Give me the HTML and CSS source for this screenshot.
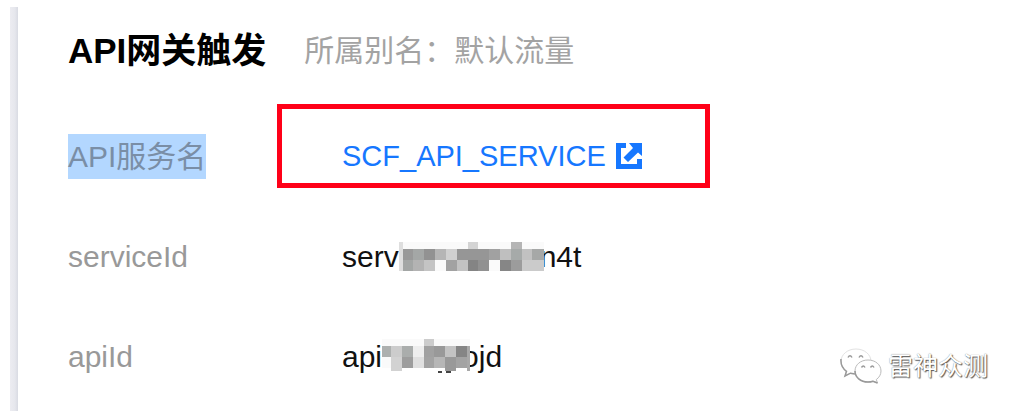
FILE: index.html
```html
<!DOCTYPE html>
<html lang="zh-CN">
<head>
<meta charset="utf-8">
<title>API网关触发</title>
<link rel="stylesheet" href="styles.css">
</head>
<body>
<main class="panel">
  <div class="content">
    <header class="heading">
      <h1 class="title">API网关触发</h1>
      <span class="alias">所属别名：默认流量</span>
    </header>
    <dl class="details">
      <div class="row">
        <dt class="label"><mark class="selected">API服务名</mark></dt>
        <dd class="value marked">
          <a class="link" href="#">SCF_API_SERVICE
            <svg class="external" viewBox="0 0 26 26" aria-hidden="true"><path d="M0 0H10V5H5V21H21V16H26V26H0Z"/><path d="M13 0H26V13L22 9.500L12 19L7.500 14.500L17 5Z"/></svg>
          </a>
        </dd>
      </div>
      <div class="row">
        <dt class="label">serviceId</dt>
        <dd class="value"><span>serv</span><svg class="mosaic mosaic-service" viewBox="205 35 435 87" preserveAspectRatio="none" shape-rendering="crispEdges" aria-hidden="true">
          <path fill="#fafafa" d="M205 35H640V122H205Z"/>
          <path fill="#dedede" d="M205 35H216V122H205Z"/>
          <path fill="#d4d4d4" d="M411 35H443V55H411Z"/><path fill="#b5b5b5" d="M540 35H573V55H540Z"/>
          <path fill="#999" d="M216 55H248V88H216Z"/><path fill="#a4a7a6" d="M248 55H281V88H248Z"/><path fill="#929292" d="M281 55H313V88H281Z"/><path fill="#b5b5b5" d="M313 55H345V88H313Z"/><path fill="#d0d0d0" d="M345 55H378V88H345Z"/><path fill="#969696" d="M378 55H475V88H378Z"/><path fill="#a1a1a1" d="M475 55H508V88H475Z"/><path fill="#bfbfbf" d="M508 55H540V88H508Z"/><path fill="#a6aaa9" d="M540 55H573V88H540Z"/><path fill="#c1c1c1" d="M573 55H605V88H573Z"/><path fill="#a6a8a7" d="M605 55H640V88H605Z"/>
          <path fill="#a3a6a5" d="M216 88H248V122H216Z"/><path fill="#b3b3b3" d="M248 88H281V122H248Z"/><path fill="#c4c4c4" d="M281 88H313V122H281Z"/><path fill="#a2a2a2" d="M345 88H378V122H345Z"/><path fill="#c2c2c2" d="M378 88H411V122H378Z"/><path fill="#848484" d="M411 88H443V122H411Z"/><path fill="#919191" d="M443 88H475V122H443Z"/><path fill="#868686" d="M508 88H540V122H508Z"/><path fill="#9c9c9c" d="M540 88H573V122H540Z"/><path fill="#cbcbcb" d="M573 88H640V122H573Z"/>
        </svg><span>n4t</span></dd>
      </div>
      <div class="row">
        <dt class="label">apiId</dt>
        <dd class="value"><span>api</span><svg class="mosaic mosaic-api" viewBox="156 26 264 105" preserveAspectRatio="none" shape-rendering="crispEdges" aria-hidden="true">
          <path fill="#fafafa" d="M156 26H420V114H156Z"/>
          <path fill="#ccc" d="M281 26H313V47H281Z"/>
          <path fill="#adb0af" d="M156 47H183V80H156Z"/><path fill="#ccc" d="M183 47H215V80H183Z"/><path fill="#aaadac" d="M215 47H248V80H215Z"/><path fill="#eee" d="M248 47H281V80H248Z"/><path fill="#a1a1a1" d="M281 47H313V80H281Z"/><path fill="#999" d="M313 47H345V80H313Z"/><path fill="#c3c3c3" d="M345 47H378V80H345Z"/><path fill="#858585" d="M378 47H410V80H378Z"/><path fill="#a8a8a8" d="M410 47H420V122H410Z"/>
          <path fill="#d2d2d2" d="M183 80H215V122H183Z"/><path fill="#9d9d9d" d="M215 80H248V114H215Z"/><path fill="#e0e0e0" d="M248 80H281V114H248Z"/><path fill="#a3a3a3" d="M281 80H313V114H281Z"/><path fill="#b6b6b6" d="M313 80H345V114H313Z"/><path fill="#999" d="M345 80H378V122H345Z"/><path fill="#a3a3a3" d="M378 80H410V114H378Z"/>
          <path fill="#444" d="M323 123H335V129H323ZM349 123H364V129H349Z"/>
        </svg><span>ojd</span></dd>
      </div>
    </dl>
  </div>
</main>
<aside class="watermark">
  <svg class="wechat" viewBox="0 0 42 36" aria-hidden="true">
    <path class="bubble faint" d="M16 1C7.500 1 1 6.500 1 13.500C1 17.500 3.200 21 6.500 23.300L5 28L10.500 25.200C12.200 25.700 14 26 16 26C24.500 26 31 20.500 31 13.500S24.500 1 16 1Z"/>
    <path class="edge" d="M1 11C.500 17 3.200 21 6.500 23.300L5 28L10.500 25.200L15 26"/>
    <path class="eye" d="M8 9.500Q10 6 12 9.500M19 9.500Q21 6 23 9.500"/>
    <path class="bubble" d="M28 12C20.500 12 15 16.800 15 23S20.500 34 28 34C29.800 34 31.500 33.700 33 33.200L37.500 35L36.300 31.500C39.200 29.500 41 26.500 41 23C41 16.800 35.500 12 28 12Z"/>
    <path class="edge" d="M15 23C15 29.200 20.500 34 28 34C29.800 34 31.500 33.700 33 33.200L37.500 35"/>
    <path class="eye" d="M21.500 19.500Q23.300 16.500 25 19.500M30.500 19.500Q32.300 16.500 34 19.500"/>
  </svg>
  <span>雷神众测</span>
</aside>
</body>
</html>
```
FILE: styles.css
```css
*,
*::before {
  box-sizing: border-box;
}

body {
  margin: 0;
  padding: 7px 10px 8px;
  background: #fff;
  color: #111;
  font-family: "Liberation Sans", "Noto Sans CJK SC", sans-serif;
  font-size: 30px;
  line-height: 45px;
}

.panel {
  display: flex;
}

.panel::before {
  content: "";
  flex: 0 0 8px;
  background: linear-gradient(to right, #ececf1, #e6e7ed 60%, #d9dbe3);
}

.content {
  flex: 1;
  padding: 20px 0 5px 50px;
}

.heading {
  display: flex;
  align-items: center;
  gap: 38px;
  height: 46px;
  margin-bottom: 33px;
}

.title {
  margin: 0;
  color: #000;
  font-size: 35px;
  font-weight: 700;
}

.alias {
  color: #a3a3a3;
}

.details {
  margin: 0;
}

.row {
  display: grid;
  grid-template-columns: 274px 1fr;
  align-items: center;
  height: 100px;
}

.label {
  color: #999;
}

.selected {
  display: inline-block;
  background: #b3d7ff;
  color: #7a8ea6;
}

.value {
  position: relative;
  display: flex;
  align-items: center;
  margin: 0;
}

.marked::before {
  content: "";
  position: absolute;
  top: -30px;
  left: -65px;
  width: 433px;
  height: 84px;
  border: 5px solid #ff0018;
  pointer-events: none;
}

.link {
  display: flex;
  align-items: center;
  gap: 10px;
  color: #1677ff;
  font-size: 29px;
  text-decoration: none;
}

.external {
  width: 26px;
  height: 26px;
  fill: currentColor;
}

.mosaic {
  position: relative;
  flex: none;
}

.mosaic-service {
  width: 145px;
  height: 29px;
  margin-right: -4px;
}

.mosaic-api {
  width: 88px;
  height: 35px;
  margin-right: -8px;
}

.watermark {
  position: absolute;
  right: 44px;
  bottom: 34px;
  display: flex;
  align-items: center;
  gap: 6px;
  color: #fff;
  font-size: 25px;
  line-height: 38px;
  text-shadow: 1px 1px 1px #555, 0 0 1px #777;
}

.wechat {
  width: 42px;
  height: 36px;
}

.bubble {
  fill: #fff;
  stroke: #bbb;
  stroke-width: 1;
}

.faint {
  stroke: #e2e2e2;
}

.edge {
  fill: none;
  stroke: #999;
  stroke-width: 1.5;
}

.eye {
  fill: none;
  stroke: #999;
  stroke-width: 1.5;
}
```
